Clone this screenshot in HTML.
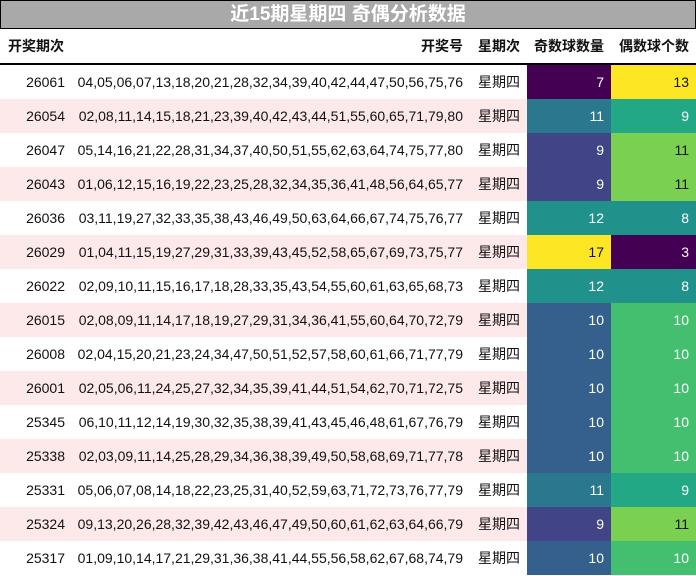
<!DOCTYPE html><html><head><meta charset="utf-8"><style>
body{margin:0;width:696px;height:576px;background:#fff;font-family:"Liberation Sans","Noto Sans CJK SC",sans-serif;overflow:hidden}
.t{position:absolute;left:0;top:0;width:694px;height:27px;background:#a9a9a9;border:1px solid #000;color:#fff;font-weight:bold;font-size:19px;text-align:center;line-height:27px}
table{position:absolute;left:0;top:29px;border-collapse:collapse;table-layout:fixed;width:696px;font-size:14px;color:#111}
th{height:34px;font-weight:bold;font-size:14px;padding:0 7px 0 0;border-bottom:2px solid #000;text-align:right;white-space:nowrap;overflow:hidden}
td{height:34px;padding:0 7px 0 0;text-align:right;white-space:nowrap;overflow:hidden}
tr.p td{background:#fde8ea}
</style></head><body>
<div class="t">近15期星期四 奇偶分析数据</div>
<table>
<colgroup><col style="width:72px"><col style="width:398px"><col style="width:57px"><col style="width:84px"><col style="width:85px"></colgroup>
<tr><th style="text-align:left;padding-left:8px">开奖期次</th><th>开奖号</th><th>星期次</th><th>奇数球数量</th><th>偶数球个数</th></tr>
<tr><td>26061</td><td>04,05,06,07,13,18,20,21,28,32,34,39,40,42,44,47,50,56,75,76</td><td>星期四</td><td style="background:#440154;color:#fff">7</td><td style="background:#fde725">13</td></tr>
<tr class="p"><td>26054</td><td>02,08,11,14,15,18,21,23,39,40,42,43,44,51,55,60,65,71,79,80</td><td>星期四</td><td style="background:#2a788e;color:#fff">11</td><td style="background:#22a884;color:#fff">9</td></tr>
<tr><td>26047</td><td>05,14,16,21,22,28,31,34,37,40,50,51,55,62,63,64,74,75,77,80</td><td>星期四</td><td style="background:#414487;color:#fff">9</td><td style="background:#7ad151">11</td></tr>
<tr class="p"><td>26043</td><td>01,06,12,15,16,19,22,23,25,28,32,34,35,36,41,48,56,64,65,77</td><td>星期四</td><td style="background:#414487;color:#fff">9</td><td style="background:#7ad151">11</td></tr>
<tr><td>26036</td><td>03,11,19,27,32,33,35,38,43,46,49,50,63,64,66,67,74,75,76,77</td><td>星期四</td><td style="background:#21918c;color:#fff">12</td><td style="background:#21918c;color:#fff">8</td></tr>
<tr class="p"><td>26029</td><td>01,04,11,15,19,27,29,31,33,39,43,45,52,58,65,67,69,73,75,77</td><td>星期四</td><td style="background:#fde725">17</td><td style="background:#440154;color:#fff">3</td></tr>
<tr><td>26022</td><td>02,09,10,11,15,16,17,18,28,33,35,43,54,55,60,61,63,65,68,73</td><td>星期四</td><td style="background:#21918c;color:#fff">12</td><td style="background:#21918c;color:#fff">8</td></tr>
<tr class="p"><td>26015</td><td>02,08,09,11,14,17,18,19,27,29,31,34,36,41,55,60,64,70,72,79</td><td>星期四</td><td style="background:#355f8d;color:#fff">10</td><td style="background:#44bf70;color:#fff">10</td></tr>
<tr><td>26008</td><td>02,04,15,20,21,23,24,34,47,50,51,52,57,58,60,61,66,71,77,79</td><td>星期四</td><td style="background:#355f8d;color:#fff">10</td><td style="background:#44bf70;color:#fff">10</td></tr>
<tr class="p"><td>26001</td><td>02,05,06,11,24,25,27,32,34,35,39,41,44,51,54,62,70,71,72,75</td><td>星期四</td><td style="background:#355f8d;color:#fff">10</td><td style="background:#44bf70;color:#fff">10</td></tr>
<tr><td>25345</td><td>06,10,11,12,14,19,30,32,35,38,39,41,43,45,46,48,61,67,76,79</td><td>星期四</td><td style="background:#355f8d;color:#fff">10</td><td style="background:#44bf70;color:#fff">10</td></tr>
<tr class="p"><td>25338</td><td>02,03,09,11,14,25,28,29,34,36,38,39,49,50,58,68,69,71,77,78</td><td>星期四</td><td style="background:#355f8d;color:#fff">10</td><td style="background:#44bf70;color:#fff">10</td></tr>
<tr><td>25331</td><td>05,06,07,08,14,18,22,23,25,31,40,52,59,63,71,72,73,76,77,79</td><td>星期四</td><td style="background:#2a788e;color:#fff">11</td><td style="background:#22a884;color:#fff">9</td></tr>
<tr class="p"><td>25324</td><td>09,13,20,26,28,32,39,42,43,46,47,49,50,60,61,62,63,64,66,79</td><td>星期四</td><td style="background:#414487;color:#fff">9</td><td style="background:#7ad151">11</td></tr>
<tr><td>25317</td><td>01,09,10,14,17,21,29,31,36,38,41,44,55,56,58,62,67,68,74,79</td><td>星期四</td><td style="background:#355f8d;color:#fff">10</td><td style="background:#44bf70;color:#fff">10</td></tr>
</table>
</body></html>
